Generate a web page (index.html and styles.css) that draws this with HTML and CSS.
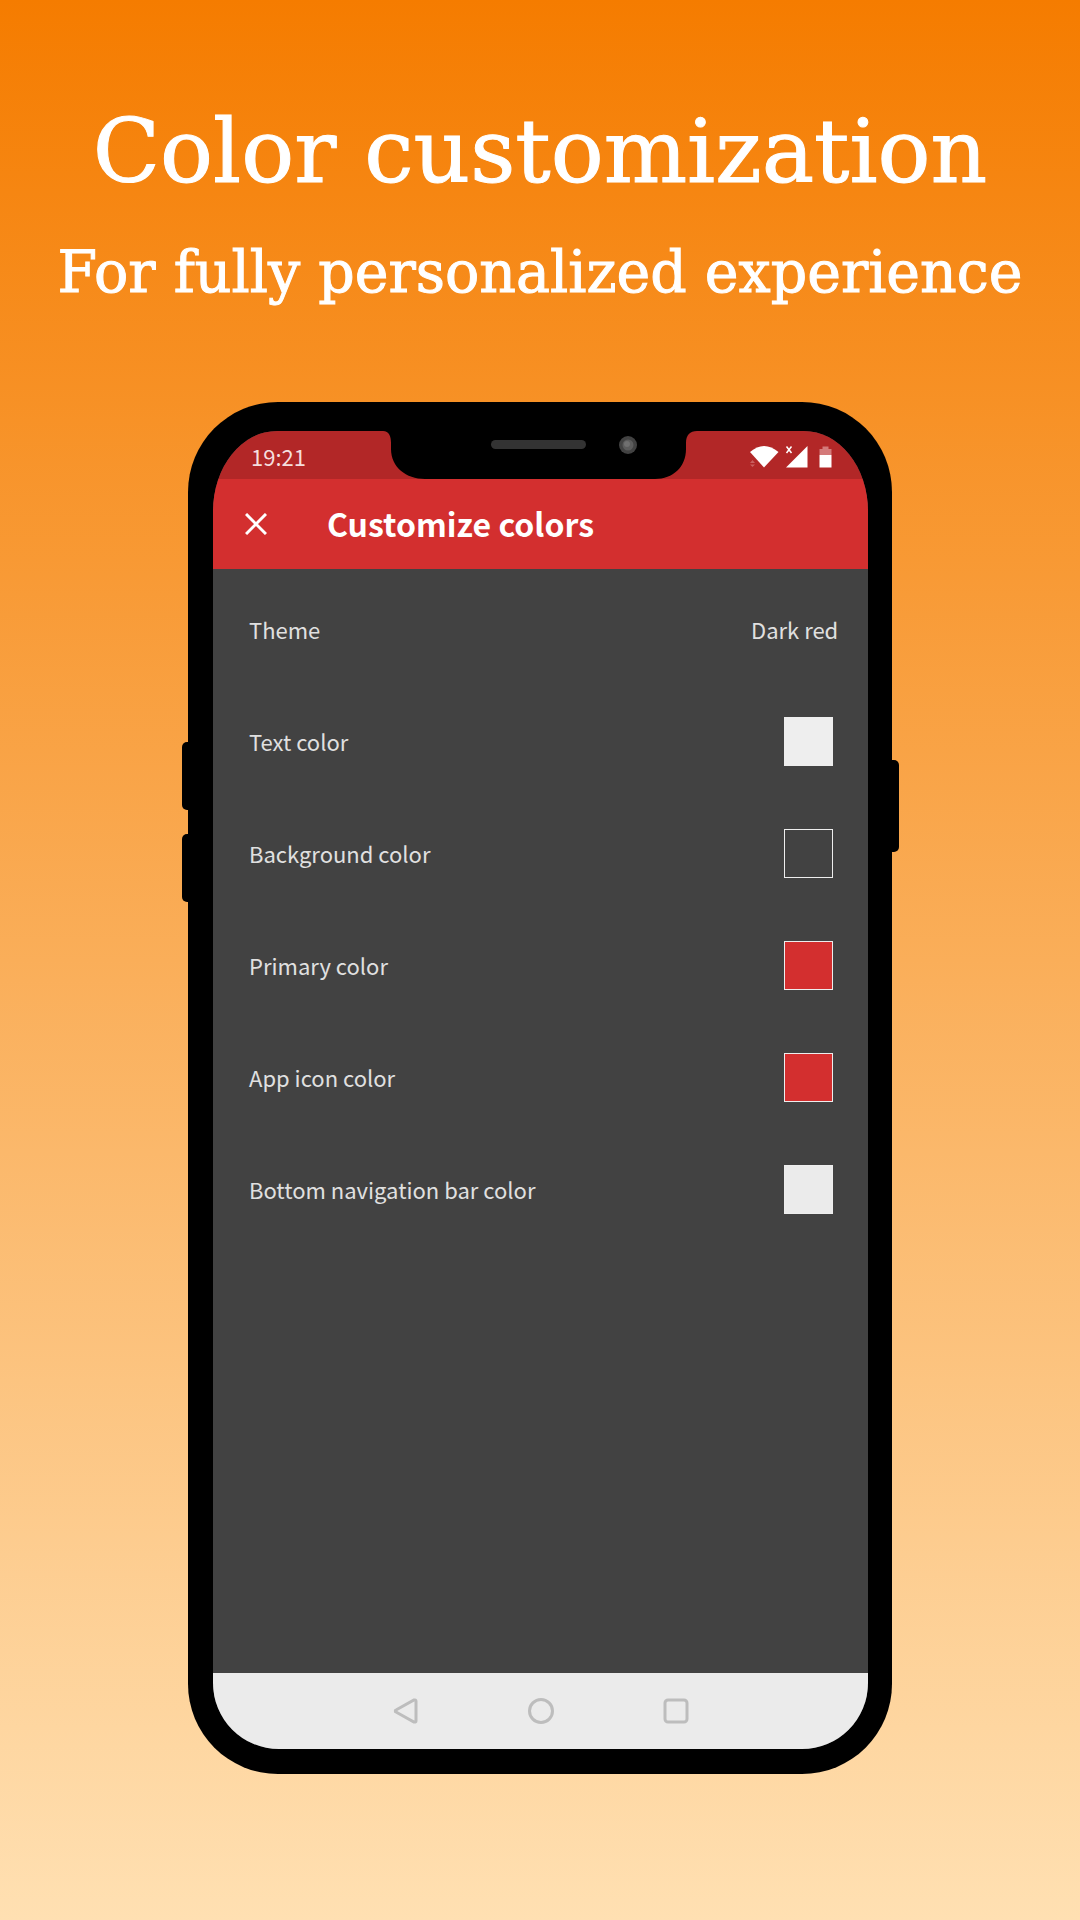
FILE: index.html
```html
<!DOCTYPE html>
<html lang="en">
<head>
<meta charset="utf-8">
<meta name="viewport" content="width=device-width, initial-scale=1">
<title>Color customization</title>
<link rel="stylesheet" href="styles.css">
</head>
<body>
<header class="promo">
  <h1 class="promo-title">Color customization</h1>
  <p class="promo-subtitle">For fully personalized experience</p>
</header>
<main class="phone">
  <span class="side-key volume-up"></span>
  <span class="side-key volume-down"></span>
  <span class="side-key power"></span>
  <div class="screen">
    <svg class="notch" viewBox="0 0 314 48" aria-hidden="true">
      <path d="M0 0C6 0 8 5 8 12V18C8 36 23 48 42 48H272C290 48 303 36 303 18V12C303 4 307 0 314 0Z" fill="#000"/>
      <rect x="108" y="9" width="95" height="9" rx="4.500" fill="#333"/>
      <circle cx="245" cy="14" r="9" fill="#424242"/>
      <circle cx="245" cy="14" r="5.500" fill="#5c5c5c"/>
      <circle cx="244" cy="13" r="3" fill="#707070"/>
    </svg>
    <div class="status-bar">
      <span>19:21</span>
      <svg class="status-icons" viewBox="0 0 86 24" aria-hidden="true">
        <path d="M2 7Q16-5 30.500 7L16 22.500Z" fill="#fff"/>
        <path d="M2 18l2.500-3L7 18ZM2 19.500h5L4.500 22Z" fill="#c95f5f"/>
        <path d="M59.500 1V22.500H38Z" fill="#fff"/>
        <path d="M38.500 1.500l5 6.500M43.500 1.500l-5 6.500" stroke="#fff" stroke-width="1.500"/>
        <path d="M71.500 10V4h3V1.500h6V4h3v6Z" fill="#d47a7a"/>
        <path d="M71.500 10h12v12.500h-12Z" fill="#fff"/>
      </svg>
    </div>
    <div class="app-bar">
      <button class="icon-button" type="button" aria-label="Close">
        <svg class="close-icon" viewBox="0 0 22 22"><path d="M1 1L21 21M21 1L1 21" stroke="#fff" stroke-width="3"/></svg>
      </button>
      <h2 class="app-title">Customize colors</h2>
    </div>
    <form class="settings">
      <div class="row row-theme">
        <label for="theme">Theme</label>
        <select id="theme" class="theme-select"><option>Dark red</option></select>
      </div>
      <div class="row">
        <label for="text-color">Text color</label>
        <input class="swatch" id="text-color" type="color" value="#eeeeee">
      </div>
      <div class="row">
        <label for="background-color">Background color</label>
        <input class="swatch" id="background-color" type="color" value="#424242">
      </div>
      <div class="row">
        <label for="primary-color">Primary color</label>
        <input class="swatch" id="primary-color" type="color" value="#d32f2f">
      </div>
      <div class="row">
        <label for="icon-color">App icon color</label>
        <input class="swatch" id="icon-color" type="color" value="#d32f2f">
      </div>
      <div class="row">
        <label for="nav-color">Bottom navigation bar color</label>
        <input class="swatch" id="nav-color" type="color" value="#ebebeb">
      </div>
    </form>
    <nav class="nav-bar" aria-label="System">
      <button class="icon-button" type="button" aria-label="Back">
        <svg class="nav-icon" viewBox="0 0 26 26"><path d="M2.500 13Q2 12.500 3 12L21 2Q23 1.500 23 3V23Q23 24.500 21 24L3 14Q2 13.500 2.500 13Z"/></svg>
      </button>
      <button class="icon-button" type="button" aria-label="Home">
        <svg class="nav-icon" viewBox="0 0 26 26"><circle cx="13" cy="13" r="11.500"/></svg>
      </button>
      <button class="icon-button" type="button" aria-label="Recent apps">
        <svg class="nav-icon" viewBox="0 0 26 26"><rect x="2" y="2" width="22" height="22" rx="3"/></svg>
      </button>
    </nav>
  </div>
</main>
</body>
</html>
```
FILE: styles.css
```css
* {
  box-sizing: border-box;
}

body {
  margin: 0;
  min-height: 100vh;
  display: flex;
  flex-direction: column;
  align-items: center;
  padding: 92px 16px 146px;
  background: linear-gradient(#f57c00, #ffe0b2);
  font-family: "Noto Sans CJK SC", "Noto Sans", sans-serif;
}

.promo {
  color: #fff;
  font-family: "DejaVu Serif", serif;
  text-align: center;
  padding-bottom: 70px;
}

.promo-title,
.promo-subtitle {
  margin: 0;
  font-weight: 400;
  -webkit-text-stroke: 1px #fff;
}

.promo-title {
  font-size: 88px;
  line-height: 120px;
}

.promo-subtitle {
  font-size: 57px;
  line-height: 120px;
}

.phone {
  position: relative;
  flex: 1;
  display: flex;
  width: 100%;
  max-width: 704px;
  padding: 29px 24px 25px 25px;
  background: #000;
  border-radius: 90px;
}

.side-key {
  position: absolute;
  width: 12px;
  height: 68px;
  background: #000;
  border-radius: 5px;
}

.volume-up {
  left: -6px;
  top: 340px;
}

.volume-down {
  left: -6px;
  top: 432px;
}

.power {
  right: -7px;
  top: 358px;
  height: 92px;
}

.screen {
  position: relative;
  flex: 1;
  display: flex;
  flex-direction: column;
  overflow: hidden;
  background: #424242;
  border-radius: 64px 64px 66px 66px / 80px 80px 66px 66px;
}

.notch {
  position: absolute;
  top: 0;
  left: 50%;
  width: 314px;
  margin-left: -158px;
}

.status-bar {
  display: flex;
  align-items: center;
  justify-content: space-between;
  height: 48px;
  padding: 4px 34px 0 38px;
  background: #b22727;
  color: #f5dede;
  font-size: 22px;
  line-height: 24px;
}

.status-bar span {
  padding-bottom: 2px;
}

.status-icons {
  width: 86px;
  height: 24px;
}

.app-bar {
  display: flex;
  align-items: center;
  gap: 60px;
  height: 90px;
  padding: 0 32px;
  background: #d32f2f;
}

.icon-button {
  display: flex;
  padding: 0;
  border: 0;
  background: none;
}

.close-icon {
  width: 22px;
  height: 22px;
}

.app-title {
  margin: 0;
  padding-bottom: 2px;
  color: #fff;
  font-size: 32px;
  font-weight: 700;
}

.settings {
  flex: 1;
  padding: 4px 35px 0 36px;
  color: #e0e0e0;
  font-size: 22px;
}

.row {
  display: flex;
  align-items: center;
  justify-content: space-between;
  height: 112px;
}

.row label,
.theme-select {
  padding: 0 0 1px;
}

.row-theme {
  margin-right: -6px;
}

.theme-select {
  appearance: none;
  border: 0;
  background: none;
  color: inherit;
  font: inherit;
}

.swatch {
  appearance: none;
  width: 49px;
  height: 49px;
  padding: 0;
  border: 1px solid #eee;
  background: none;
}

.swatch::-webkit-color-swatch-wrapper {
  padding: 0;
}

.swatch::-webkit-color-swatch {
  border: 0;
  border-radius: 0;
}

.nav-bar {
  display: flex;
  align-items: center;
  justify-content: center;
  gap: 109px;
  height: 76px;
  background: #ebebeb;
}

.nav-icon {
  width: 26px;
  height: 26px;
  fill: none;
  stroke: #bdbdbd;
  stroke-width: 3px;
}
```
